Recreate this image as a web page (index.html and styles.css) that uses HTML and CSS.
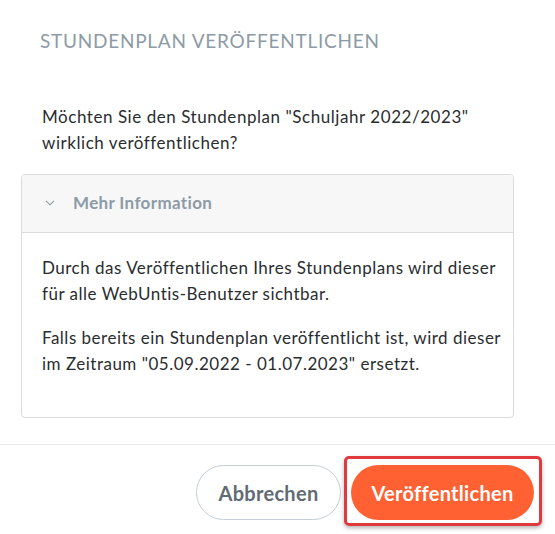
FILE: index.html
```html
<!DOCTYPE html>
<html lang="de">
<head>
<meta charset="utf-8">
<title>Stundenplan veröffentlichen</title>
<link rel="stylesheet" href="styles.css">
</head>
<body>
<div class="dialog">
  <div class="content">
    <h1 class="title">STUNDENPLAN VERÖFFENTLICHEN</h1>
    <p class="message">Möchten Sie den Stundenplan "Schuljahr 2022/2023" wirklich veröffentlichen?</p>
    <div class="panel">
      <div class="panel-header">
        <svg class="chevron" width="10" height="6" viewBox="0 0 10 6"><path d="M1 0.8 L5 4.8 L9 0.8" fill="none" stroke="#8f9aa3" stroke-width="1.1"/></svg>
        <span class="panel-title">Mehr Information</span>
      </div>
      <div class="panel-body">
        <p>Durch das Veröffentlichen Ihres Stundenplans wird dieser für alle WebUntis-Benutzer sichtbar.</p>
        <p>Falls bereits ein Stundenplan veröffentlicht ist, wird dieser im Zeitraum "05.09.2022 - 01.07.2023" ersetzt.</p>
      </div>
    </div>
  </div>
  <div class="footer">
    <button class="btn btn-secondary">Abbrechen</button>
    <button class="btn btn-primary">Veröffentlichen</button>
  </div>
</div>
</body>
</html>
```
FILE: styles.css
```css
html, body {
  margin: 0;
  padding: 0;
  background: #ffffff;
}
body {
  font-family: Lato, "Open Sans", sans-serif;
  color: #2a2d30;
  width: 555px;
  height: 534px;
  overflow: hidden;
}
.content {
  padding: 29px 41px 0 21px;
}
.title {
  margin: 0 0 0 19px;
  font-size: 19px;
  line-height: 24px;
  font-weight: 400;
  color: #8d9ba6;
  letter-spacing: 0.75px;
}
.message {
  margin: 51px 0 0 21px;
  font-size: 17px;
  line-height: 26px;
  letter-spacing: 0.55px;
}
.panel {
  margin-top: 18px;
  border: 1px solid #dcdcdc;
  border-radius: 4px;
  overflow: hidden;
}
.panel-header {
  display: flex;
  align-items: center;
  height: 55px;
  padding: 0 0 2px 23px;
  background: #f7f7f7;
  border-bottom: 1px solid #dcdcdc;
}
.chevron {
  margin-right: 18px;
}
.panel-title {
  font-size: 17px;
  font-weight: 700;
  color: #8d9ba6;
  letter-spacing: 0.35px;
}
.panel-body {
  padding: 22px 4px 40px 20px;
}
.panel-body p {
  margin: 0;
  font-size: 17px;
  line-height: 26px;
  letter-spacing: 0.5px;
}
.panel-body p + p {
  margin-top: 18px;
}
.footer {
  margin-top: 26px;
  border-top: 1px solid #e8eaeb;
  padding: 20px 21px 0 0;
  display: flex;
  justify-content: flex-end;
  gap: 10px;
}
.btn {
  height: 55px;
  border-radius: 28px;
  font-family: Lato, "Open Sans", sans-serif;
  font-size: 20px;
  font-weight: 700;
  letter-spacing: 0.3px;
  cursor: pointer;
}
.btn-secondary {
  width: 145px;
  background: #ffffff;
  border: 1px solid #c5ced6;
  color: #5f6b75;
}
.btn-primary {
  position: relative;
  width: 183px;
  background: #ff6133;
  border: none;
  color: #ffffff;
}
.btn-primary::after {
  content: "";
  position: absolute;
  top: -9px;
  bottom: -6px;
  left: -7px;
  right: -8px;
  border: 3px solid #e0393e;
  border-radius: 5px;
  box-shadow: 0 2px 4px rgba(0, 0, 0, 0.3);
  pointer-events: none;
}
```
